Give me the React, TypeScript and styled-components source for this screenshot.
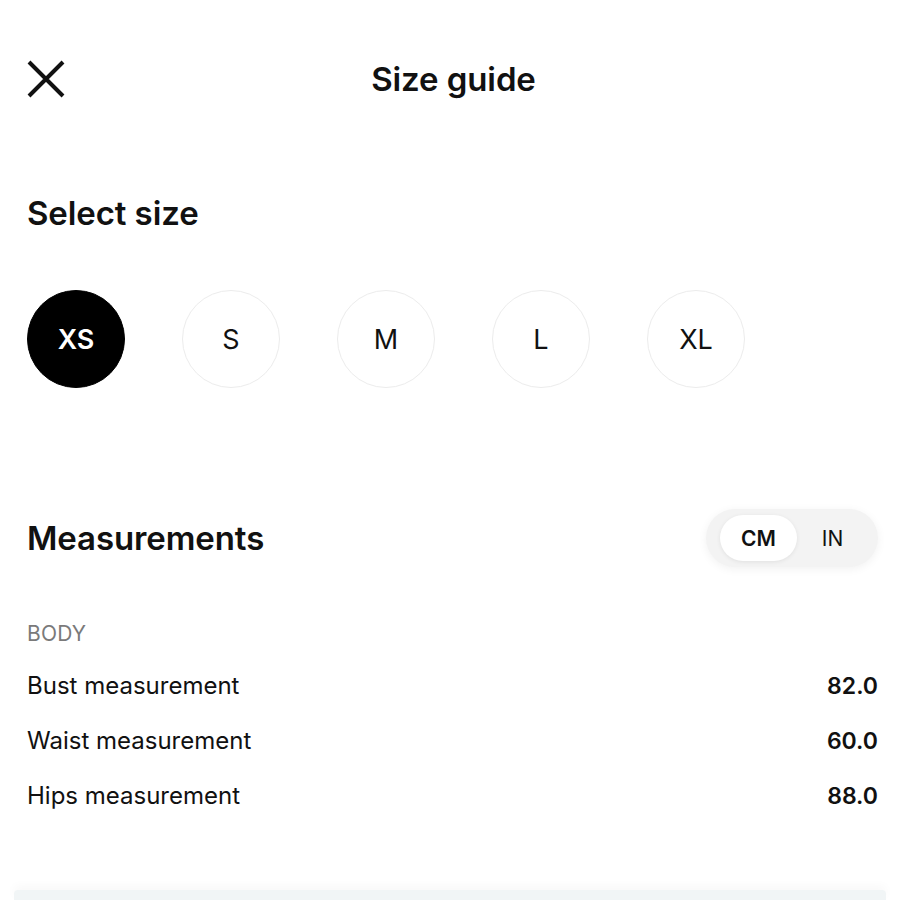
import { createGlobalStyle, styled } from "styled-components";

const GlobalStyle = createGlobalStyle`
    html, body {
        margin: 0;
        padding: 0;
        background: #ffffff;
    }
    body {
        font-family: Inter, "Liberation Sans", Arial, sans-serif;
        color: #111111;
    }
`;

const Page = styled.div`
    width: 900px;
    height: 900px;
    overflow: hidden;
    display: flex;
    flex-direction: column;
    background: #fff;
`;

const Content = styled.div`
    padding: 0 22px 0 27px;
    display: flex;
    flex-direction: column;
`;

const Header = styled.header`
    height: 72px;
    margin-top: 43px;
    display: grid;
    grid-template-columns: 60px 1fr 60px;
    align-items: center;
`;

const CloseButton = styled.button`
    border: 0;
    background: none;
    padding: 0;
    width: 38px;
    height: 38px;
    display: flex;
    align-items: center;
    justify-content: center;
    cursor: pointer;
`;

const Title = styled.h1`
    margin: 0;
    text-align: center;
    font-size: 33px;
    font-weight: 600;
    letter-spacing: -0.1px;
    padding-left: 2px;
`;

const SectionTitle = styled.h2<{ $size?: number }>`
    margin: 0;
    font-size: ${(p) => p.$size ?? 33}px;
    font-weight: 600;
    letter-spacing: -0.1px;
`;

const SelectBlock = styled.section`
    margin-top: 78px;
`;

const SizeRow = styled.div`
    margin-top: 57px;
    display: flex;
    gap: 57px;
`;

const SizeCircle = styled.button<{ $active?: boolean }>`
    width: 98px;
    height: 98px;
    border-radius: 50%;
    border: 1px solid ${(p) => (p.$active ? "#000" : "#ececec")};
    background: ${(p) => (p.$active ? "#000" : "#fff")};
    color: ${(p) => (p.$active ? "#fff" : "#111")};
    font-family: inherit;
    font-size: 27px;
    font-weight: ${(p) => (p.$active ? 600 : 400)};
    display: flex;
    align-items: center;
    justify-content: center;
    padding: 0;
    cursor: pointer;
`;

const MeasureHeader = styled.div`
    margin-top: 121px;
    display: flex;
    align-items: center;
    justify-content: space-between;
`;

const UnitToggle = styled.div`
    width: 172px;
    height: 58px;
    box-sizing: border-box;
    padding: 6px 14px;
    border-radius: 29px;
    background: #f3f3f3;
    box-shadow: 0 2px 10px rgba(0, 0, 0, 0.06);
    display: flex;
    align-items: center;
`;

const UnitOption = styled.button<{ $active?: boolean }>`
    border: 0;
    height: 46px;
    width: ${(p) => (p.$active ? "77px" : "auto")};
    flex: ${(p) => (p.$active ? "0 0 auto" : "1")};
    border-radius: 23px;
    background: ${(p) => (p.$active ? "#fff" : "transparent")};
    box-shadow: ${(p) => (p.$active ? "0 1px 4px rgba(0,0,0,0.08)" : "none")};
    font-family: inherit;
    font-size: 21px;
    font-weight: ${(p) => (p.$active ? 600 : 400)};
    color: #111;
    padding: ${(p) => (p.$active ? "0" : "0 0 0 4px")};
    cursor: pointer;
`;

const GroupLabel = styled.div`
    margin-top: 54px;
    font-size: 21px;
    color: #7a7a7a;
    letter-spacing: 0.2px;
`;

const RowList = styled.div`
    margin-top: 12px;
    display: flex;
    flex-direction: column;
`;

const Row = styled.div`
    height: 55px;
    display: flex;
    align-items: center;
    justify-content: space-between;
    font-size: 24px;
`;

const Value = styled.span`
    font-weight: 600;
    font-size: 23px;
`;

const BottomBand = styled.div`
    margin: auto 14px 0;
    height: 10px;
    background: #f1f5f6;
    border-radius: 4px 4px 0 0;
    box-shadow: 0 -4px 10px rgba(0, 0, 0, 0.03);
`;

const sizes = ["XS", "S", "M", "L", "XL"];
const rows = [
    { label: "Bust measurement", value: "82.0" },
    { label: "Waist measurement", value: "60.0" },
    { label: "Hips measurement", value: "88.0" },
];

export default function App() {
    return (
        <Page>
            <GlobalStyle />
            <Content>
                <Header>
                    <CloseButton aria-label="Close">
                        <svg width="38" height="38" viewBox="0 0 38 38">
                            <path
                                d="M2 2 L36 36 M36 2 L2 36"
                                stroke="#111"
                                strokeWidth="4"
                                strokeLinecap="butt"
                            />
                        </svg>
                    </CloseButton>
                    <Title>Size guide</Title>
                    <span />
                </Header>

                <SelectBlock>
                    <SectionTitle>Select size</SectionTitle>
                    <SizeRow>
                        {sizes.map((s) => (
                            <SizeCircle key={s} $active={s === "XS"}>
                                {s}
                            </SizeCircle>
                        ))}
                    </SizeRow>
                </SelectBlock>

                <MeasureHeader>
                    <SectionTitle $size={33}>Measurements</SectionTitle>
                    <UnitToggle>
                        <UnitOption $active>CM</UnitOption>
                        <UnitOption>IN</UnitOption>
                    </UnitToggle>
                </MeasureHeader>

                <GroupLabel>BODY</GroupLabel>
                <RowList>
                    {rows.map((r) => (
                        <Row key={r.label}>
                            <span>{r.label}</span>
                            <Value>{r.value}</Value>
                        </Row>
                    ))}
                </RowList>
            </Content>
            <BottomBand />
        </Page>
    );
}
